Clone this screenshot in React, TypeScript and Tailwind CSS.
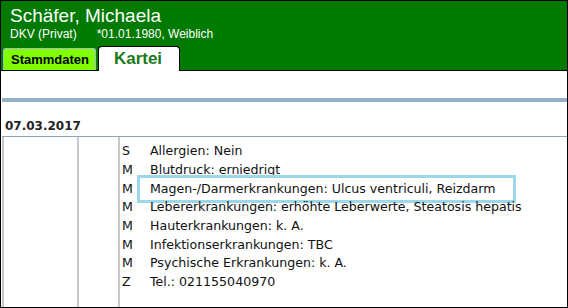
import React from 'react';

const rows: { code: string; text: string; marked?: boolean }[] = [
  { code: 'S', text: 'Allergien: Nein' },
  { code: 'M', text: 'Blutdruck: erniedrigt' },
  { code: 'M', text: 'Magen-/Darmerkrankungen: Ulcus ventriculi, Reizdarm', marked: true },
  { code: 'M', text: 'Lebererkrankungen: erhöhte Leberwerte, Steatosis hepatis' },
  { code: 'M', text: 'Hauterkrankungen: k. A.' },
  { code: 'M', text: 'Infektionserkrankungen: TBC' },
  { code: 'M', text: 'Psychische Erkrankungen: k. A.' },
  { code: 'Z', text: 'Tel.: 021155040970' },
];

export default function App() {
  return (
    <div className="w-[568px] h-[308px] border border-black bg-white flex flex-col overflow-hidden">
      {/* Patient header */}
      <div className="h-[70px] bg-[#007a00] border-b border-black flex flex-col shrink-0">
        <div className="pl-[9px] pt-[3px] text-white font-['Liberation_Sans',Arial,sans-serif]">
          <div className="text-[19px] leading-[23px]">Schäfer, Michaela</div>
          <div className="text-[12px] leading-[14px] whitespace-pre">DKV (Privat)      *01.01.1980, Weiblich</div>
        </div>
        <div className="mt-auto flex items-end gap-[2px] pl-[2px] -mb-px font-['Liberation_Sans',Arial,sans-serif] font-bold">
          <div className="h-[22px] w-[93px] mb-px bg-[#7fff00] border border-[#a8b8c8] border-b-0 rounded-t-[3px] flex items-center pl-[7px] text-[13px] text-black">
            Stammdaten
          </div>
          <div className="h-[25px] w-[82px] bg-white border border-black border-b-0 rounded-t-[4px] flex items-center justify-center pr-[2px] text-[17px] text-[#1a7a1a]">
            Kartei
          </div>
        </div>
      </div>

      <div className="h-[27px] shrink-0" />
      <div className="h-[4px] ml-[1px] bg-[#94aec5] shrink-0" />

      {/* Karteieintrag */}
      <div className="font-['DejaVu_Sans',Verdana,sans-serif] text-[#111]">
        <div className="pl-[4px] pt-[17px] h-[34px] text-[12px] leading-[15px] font-bold text-[#222]">07.03.2017</div>
        <div className="ml-[1px] border-t border-[#8fa3bf] flex h-[200px]">
          <div className="w-[77px] border-l-2 border-r-2 border-[#c8c8c8]" />
          <div className="w-[41px] border-r-2 border-[#c8c8c8]" />
          <div className="flex-1 pt-[5px] pl-[2px]">
            {rows.map((r, i) => (
              <div key={i} className="flex h-[18.7px] items-center text-[12.6px] leading-[14px]">
                <span className="w-[28px] shrink-0">{r.code}</span>
                <span
                  className={
                    r.marked
                      ? '-ml-[13px] pl-[10px] pr-[17px] py-[4px] border-[3px] border-[#9cd8ea]'
                      : ''
                  }
                >
                  {r.text}
                </span>
              </div>
            ))}
          </div>
        </div>
      </div>
    </div>
  );
}
